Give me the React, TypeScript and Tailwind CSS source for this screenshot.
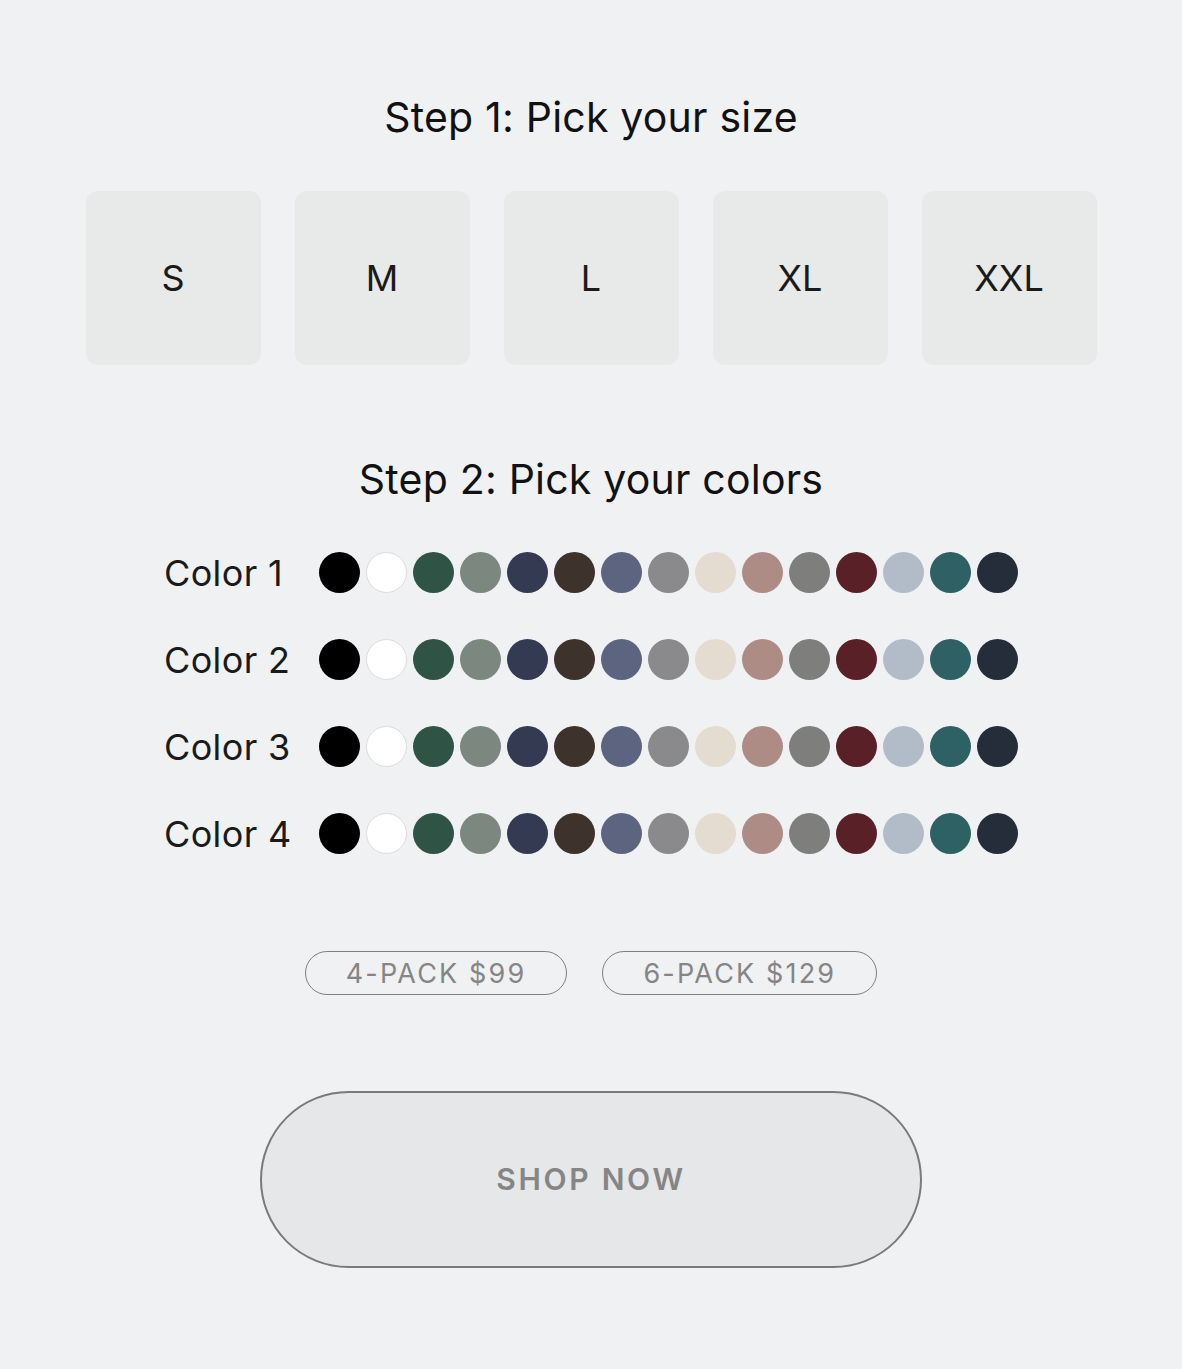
import { useState } from "react"

const sizes = ["S", "M", "L", "XL", "XXL"]

const swatches = [
  "#000000",
  "#ffffff",
  "#2f5446",
  "#7c877f",
  "#333a52",
  "#3e322c",
  "#5c6480",
  "#8a8a8c",
  "#e4dbd1",
  "#ae8c86",
  "#7e7f7c",
  "#5a2028",
  "#b2bcc8",
  "#2e6163",
  "#262d3a",
]

const packs = ["4-PACK $99", "6-PACK $129"]

function ColorRow({ label }: { label: string }) {
  const [picked, setPicked] = useState<number | null>(null)

  return (
    <div className="flex items-center">
      <div className="w-[155px] text-[36px] leading-none tracking-[0.01em] text-[#1a1a1a]">{label}</div>
      <div className="flex gap-[6px]">
        {swatches.map((c, i) => (
          <button
            key={c + i}
            onClick={() => setPicked(i)}
            className={`h-[41px] w-[41px] rounded-full ${
              c === "#ffffff" ? "border border-[#dcdcdc]" : ""
            } ${picked === i ? "ring-2 ring-offset-2 ring-[#555]" : ""}`}
            style={{ backgroundColor: c }}
          />
        ))}
      </div>
    </div>
  )
}

export default function App() {
  const [size, setSize] = useState<string | null>(null)

  return (
    <div
      className="min-h-[1369px] bg-[#f0f1f3] flex flex-col items-center pt-[94px] pb-[100px]"
      style={{ fontFamily: "Inter, 'Noto Sans', sans-serif" }}
    >
      <h2 className="text-[41px] leading-[46px] text-[#111] tracking-[0.005em]">Step 1: Pick your size</h2>

      <div className="mt-[51px] flex gap-[34px]">
        {sizes.map((s) => (
          <button
            key={s}
            onClick={() => setSize(s)}
            className={`h-[174px] w-[175px] rounded-[12px] bg-[#e8e9e9] text-[36px] text-[#1a1a1a] flex items-center justify-center ${
              size === s ? "outline-2 outline-[#555]" : ""
            }`}
          >
            {s}
          </button>
        ))}
      </div>

      <h2 className="mt-[91px] text-[41px] leading-[46px] text-[#111] tracking-[0.005em]">Step 2: Pick your colors</h2>

      <div className="mt-[50px] flex flex-col gap-[46px]">
        {["Color 1", "Color 2", "Color 3", "Color 4"].map((l) => (
          <ColorRow key={l} label={l} />
        ))}
      </div>

      <div className="mt-[97px] flex gap-[35px]">
        {packs.map((p) => (
          <button
            key={p}
            className="h-[44px] px-[40px] rounded-full border-[1.5px] border-[#7f7f7f] text-[27px] leading-none tracking-[0.08em] text-[#858585]"
          >
            {p}
          </button>
        ))}
      </div>

      <button className="mt-[96px] h-[177px] w-[662px] rounded-full border-2 border-[#7a7a7a] bg-[#e6e7e9] text-[30px] font-semibold tracking-[0.09em] text-[#858585]">
        SHOP NOW
      </button>
    </div>
  )
}
